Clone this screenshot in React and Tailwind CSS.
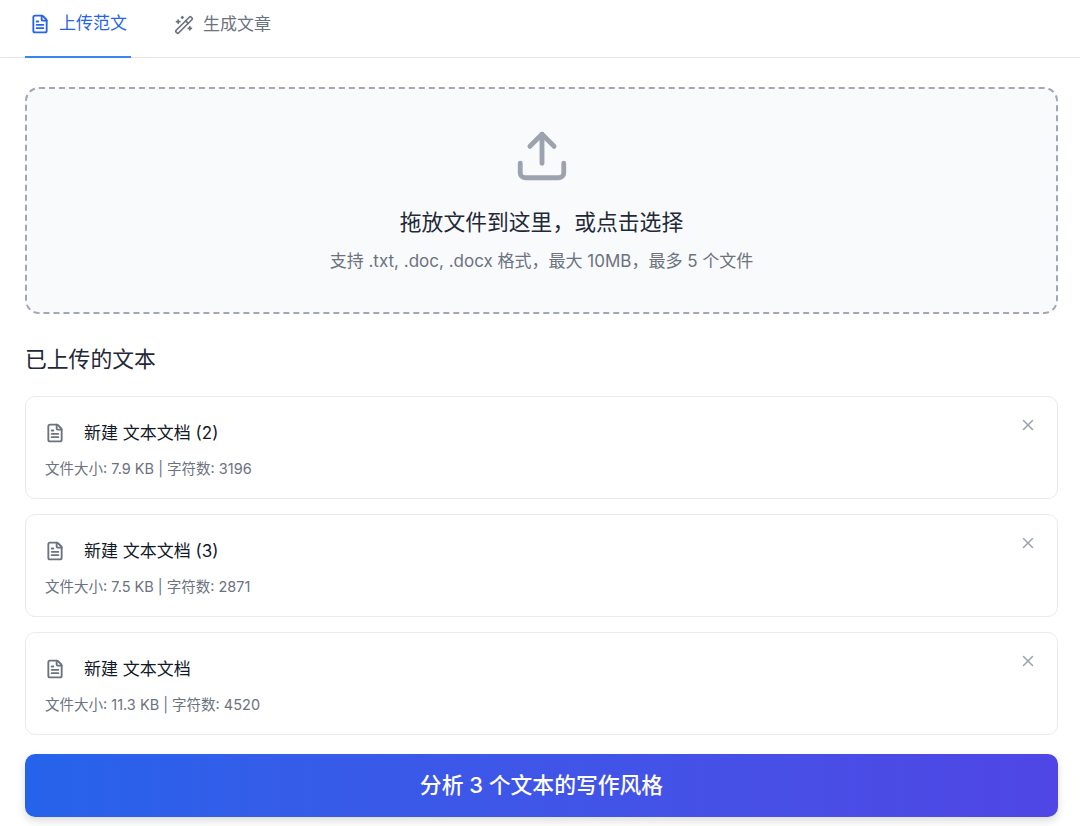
import React from "react";
import { FileText, WandSparkles, Upload, X } from "lucide-react";

const files = [
  { name: "新建 文本文档 (2)", size: "7.9 KB", count: 3196 },
  { name: "新建 文本文档 (3)", size: "7.5 KB", count: 2871 },
  { name: "新建 文本文档", size: "11.3 KB", count: 4520 },
];

function FileCard({ file }) {
  return (
    <div className="h-[103px] rounded-[10px] border border-[#e9ebef] bg-white pl-[19px] pr-[20px] pt-[20px] flex justify-between">
      <div>
        <div className="flex items-center h-[32px] text-[17px] text-[#111827]">
          <FileText className="w-[20px] h-[20px] text-[#6b7280] mr-[18px]" strokeWidth={2.2} />
          <span className="pt-[2px] pl-[1px]">{file.name}</span>
        </div>
        <p className="mt-[10px] text-[14.5px] leading-[20px] text-[#6b7280]">
          文件大小: {file.size} | 字符数: {file.count}
        </p>
      </div>
      <X className="w-[18px] h-[18px] text-[#9ca3af] mt-[-1px]" strokeWidth={2} />
    </div>
  );
}

export default function App() {
  return (
    <div className="w-[1080px] h-[826px] overflow-hidden bg-white font-['Inter','Noto_Sans_CJK_SC',sans-serif]">
      <div className="h-[58px] border-b border-[#e5e7eb] flex pl-[25px]">
        <button className="h-[58px] w-[106px] border-b-2 border-[#3b82f6] flex items-center pl-[5px] pb-[8px] text-[17px] text-[#2563eb]">
          <FileText className="w-[20px] h-[20px] mr-[9px]" strokeWidth={2.2} />
          上传范文
        </button>
        <button className="h-[58px] ml-[38px] flex items-center pl-[5px] pb-[8px] text-[17px] text-[#6b7280]">
          <WandSparkles className="w-[20px] h-[20px] mr-[9px]" strokeWidth={2} />
          生成文章
        </button>
      </div>

      <div className="pl-[25px] pr-[22px] pt-[29px]">
        <div className="h-[227px] rounded-[14px] border-2 border-dashed border-[#a2a7b4] bg-[#f9fafb] flex flex-col items-center pt-[38px]">
          <Upload className="w-[58px] h-[58px] text-[#9ca3af]" strokeWidth={2} />
          <p className="mt-[21px] text-[21.8px] leading-[32px] text-[#1f2937]">拖放文件到这里，或点击选择</p>
          <p className="mt-[11px] text-[17px] leading-[24px] text-[#6b7280]">
            支持 .txt, .doc, .docx 格式，最大 10MB，最多 5 个文件
          </p>
        </div>

        <h3 className="mt-[29px] text-[21.8px] leading-[32px] text-[#1f2937]">已上传的文本</h3>

        <div className="mt-[21px] flex flex-col gap-[15px]">
          {files.map((f) => (
            <FileCard key={f.name} file={f} />
          ))}
        </div>

        <button className="mt-[19px] w-full h-[63px] rounded-[10px] bg-gradient-to-r from-[#2563eb] to-[#4f46e5] text-white text-[21.8px] font-medium shadow-[0_4px_8px_rgba(0,0,0,0.14)]">
          分析 3 个文本的写作风格
        </button>
      </div>
    </div>
  );
}
